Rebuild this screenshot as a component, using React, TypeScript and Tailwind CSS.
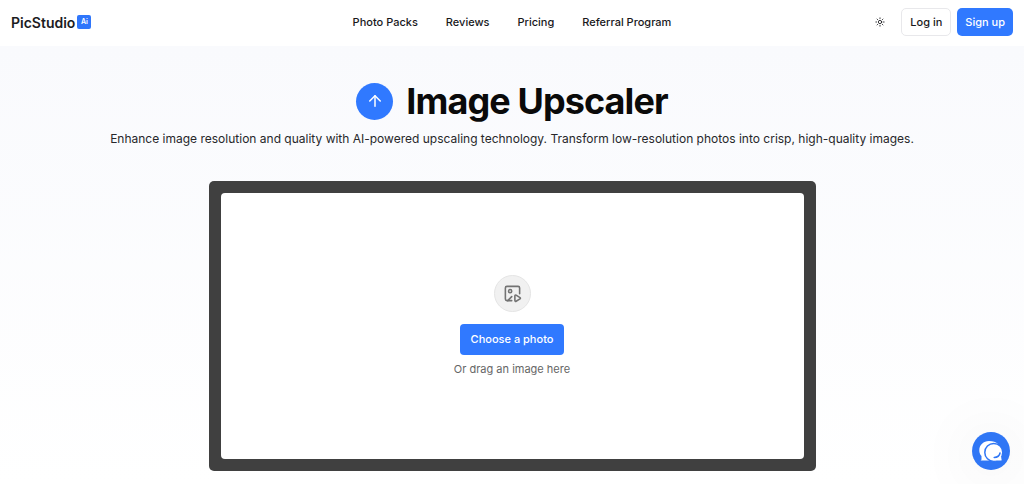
import React from "react";
import { ArrowUp, ImagePlay, Sun } from "lucide-react";

const links = ["Photo Packs", "Reviews", "Pricing", "Referral Program"];

function Header() {
  return (
    <header className="grid h-[46px] grid-cols-[1fr_auto_1fr] items-center bg-white px-[11px] pb-0.5">
      <a href="#home" className="flex items-center gap-0.5 text-[14px] font-semibold text-[#1c1c1f]">
        PicStudio
        <span className="flex h-3.5 w-3.5 items-center justify-center rounded-xs bg-[#2f76fb] text-[7px] font-semibold text-white">
          Ai
        </span>
      </a>
      <nav className="flex items-center gap-7 text-[11px] font-medium text-[#18181b]">
        {links.map((l) => (
          <a key={l} href="#nav">{l}</a>
        ))}
      </nav>
      <div className="flex items-center justify-end gap-1.5 text-[11px] font-medium">
        <button aria-label="Toggle theme" className="mr-2.5 flex items-center text-[#18181b]">
          <Sun size={10} strokeWidth={2} />
        </button>
        <button className="h-7 rounded-[5px] border border-[#e8e8eb] bg-white px-2 text-[#18181b]">Log in</button>
        <button className="h-7 rounded-[5px] bg-[#3079ff] px-2 text-white">Sign up</button>
      </div>
    </header>
  );
}

function Uploader() {
  return (
    <section className="mt-8 flex h-[290px] w-[607px] max-w-full flex-col rounded-[5px] bg-[#404040] p-3">
      <div className="flex flex-1 flex-col items-center justify-center rounded-[4px] bg-white">
        <div className="flex h-[37px] w-[37px] items-center justify-center rounded-full border border-[#e5e5e5] bg-[#f1f1f1] text-[#737373]">
          <ImagePlay size={19} strokeWidth={2} />
        </div>
        <button className="mt-3 h-[31px] rounded-[4px] bg-[#3079ff] px-[11px] text-[11px] font-medium text-white">
          Choose a photo
        </button>
        <p className="mt-1.5 text-[11px] leading-4 text-[#666666]">Or drag an image here</p>
      </div>
    </section>
  );
}

function ChatIcon() {
  return (
    <svg viewBox="0 0 38 38" className="h-[38px] w-[38px]" aria-hidden="true">
      <path
        d="M17 9C11.500 9 7.300 13 7.300 18.200c0 2.300.8 4.300 2.200 5.900v3.100c0 .7-.3 1.100-1 1.300H20V13l6-1C24 10 21 9 17 9Z"
        fill="#fff"
      />
      <circle cx="21.800" cy="20.400" r="9" fill="#fff" stroke="#2f76f5" strokeWidth="1.500" />
      <path d="M22 28.500h7.300c.5-.2.500-.6.200-1l-.5-3.500Z" fill="#fff" />
      <path d="M22.200 25.400c3 0 5.300-1.600 5.800-4.400" fill="none" stroke="#2f76f5" strokeWidth="1.500" strokeLinecap="round" />
    </svg>
  );
}

export default function App() {
  return (
    <div className="min-h-screen bg-white font-['Inter',sans-serif]">
      <Header />
      <main className="flex min-h-[438px] flex-col items-center bg-linear-to-b from-[#f9fafd] to-[#ffffff] px-4 pt-[35px]">
        <div className="flex items-center gap-[13px]">
          <span className="flex h-[37px] w-[37px] items-center justify-center rounded-full bg-[#3079ff] text-white">
            <ArrowUp size={18} strokeWidth={2} />
          </span>
          <h1 className="text-[36px] leading-10 font-bold tracking-tight text-[#0a0a0a]">Image Upscaler</h1>
        </div>
        <p className="mt-2 text-center text-[12px] leading-5 text-[#27272a]">
          Enhance image resolution and quality with AI-powered upscaling technology. Transform low-resolution photos into
          crisp, high-quality images.
        </p>
        <Uploader />
      </main>
      <button
        aria-label="Open chat"
        className="fixed right-3.5 bottom-3.5 rounded-full bg-[#2f76f5] shadow-[0_4px_60px_rgba(0,0,0,0.1)]"
      >
        <ChatIcon />
      </button>
    </div>
  );
}
